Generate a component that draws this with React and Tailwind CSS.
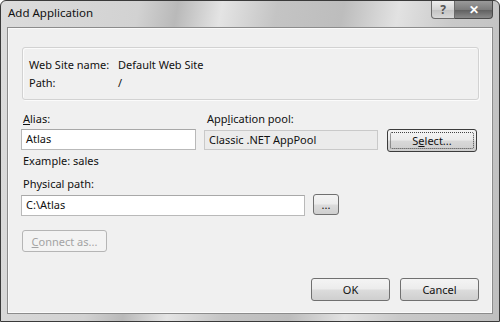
import React from "react";

const font = { fontFamily: '"Noto Sans", "Open Sans", sans-serif' };

function Btn({ children, className = "", focused = false, disabled = false }) {
  return (
    <div
      className={`relative flex items-center justify-center rounded-[3px] border text-[11px] ${
        disabled
          ? "border-[#b5b5b5] bg-[#f3f3f3] text-[#a3a3a3]"
          : focused
          ? "border-[#3c3c3c] bg-[linear-gradient(#f4f4f4_0%,#ececec_48%,#d8d8d8_52%,#cdcdcd_100%)] text-[#111]"
          : "border-[#707070] bg-[linear-gradient(#f4f4f4_0%,#ececec_48%,#dcdcdc_52%,#cfcfcf_100%)] text-[#111]"
      } ${className}`}
    >
      {focused && (
        <div className="absolute inset-[2px] rounded-[2px] border border-dotted border-[#444]" />
      )}
      <span className="relative leading-none">{children}</span>
    </div>
  );
}

function Field({ children, className = "", readOnly = false }) {
  return (
    <div
      className={`flex items-center border px-[4px] text-[11px] text-[#111] ${
        readOnly
          ? "border-[#c9c9c9] bg-[#ebebeb]"
          : "border-[#b9b9b9] border-t-[#a8a8a8] bg-white"
      } ${className}`}
    >
      {children}
    </div>
  );
}

export default function App() {
  return (
    <div
      className="flex h-[322px] w-[500px] flex-col rounded-t-[6px] border border-[#3a3a3a] bg-[linear-gradient(100deg,#dcdcdc_0%,#d2d2d2_25%,#b9b9b9_32%,#e4e4e4_40%,#c4c4c4_50%,#bdbdbd_62%,#e2e2e2_72%,#c9c9c9_82%,#bfbfbf_100%)] text-[#111]"
      style={font}
    >
      {/* title bar */}
      <div className="flex h-[25px] items-start justify-between">
        <div className="pl-[7px] pt-[3px] text-[11.5px] text-[#111]">Add Application</div>
        <div className="mr-[6px] flex">
          <div className="flex h-[18px] w-[24px] items-center justify-center rounded-bl-[4px] border border-t-0 border-[#6a6a6a] bg-[linear-gradient(#eeeeee,#d4d4d4_50%,#c2c2c2_51%,#d8d8d8)] text-[12px] font-bold text-[#555]">
            ?
          </div>
          <div className="flex h-[18px] w-[38px] items-center justify-center rounded-br-[4px] border border-l-0 border-t-0 border-[#4a4a4a] bg-[linear-gradient(#9a9a9a,#7c7c7c_50%,#5e5e5e_51%,#8a8a8a)] text-[12px] font-bold text-white">
            ✕
          </div>
        </div>
      </div>

      {/* client area */}
      <div className="mx-[6px] mt-[1px] flex h-[287px] flex-col border border-[#8c8c8c] bg-[#f0f0f0] px-[13px] shadow-[inset_0_0_0_1px_#fafafa] text-[11px]">
        {/* site info group */}
        <div className="ml-[1px] mt-[19px] flex h-[53px] flex-col gap-[1px] rounded-[3px] border border-[#d2d2d2] pl-[6px] pt-[9px] shadow-[1px_1px_0_#fbfbfb,inset_1px_1px_0_#fbfbfb]">
          <div className="flex h-[17px] items-center">
            <span className="w-[89px]">Web Site name:</span>
            <span>Default Web Site</span>
          </div>
          <div className="flex h-[17px] items-center">
            <span className="w-[89px]">Path:</span>
            <span>/</span>
          </div>
        </div>

        {/* alias / app pool */}
        <div className="mt-[11px] flex">
          <div className="flex w-[175px] flex-col">
            <div className="flex h-[17px] items-center pl-[2px]">
              <span>
                <span className="underline">A</span>lias:
              </span>
            </div>
            <Field className="mt-[1px] h-[21px] w-[175px]">Atlas</Field>
            <div className="mt-[3px] flex h-[17px] items-center pl-[2px]">Example: sales</div>
          </div>
          <div className="ml-[8px] flex flex-col">
            <div className="flex h-[17px] items-center pl-[3px]">
              <span>
                App<span className="underline">l</span>ication pool:
              </span>
            </div>
            <div className="mt-[1px] flex items-start">
              <Field readOnly className="mt-[1px] h-[20px] w-[174px]">
                Classic .NET AppPool
              </Field>
              <Btn focused className="ml-[9px] h-[23px] w-[90px]">
                S<span className="underline">e</span>lect...
              </Btn>
            </div>
          </div>
        </div>

        {/* physical path */}
        <div className="mt-[6px] flex h-[17px] items-center pl-[2px]">Physical path:</div>
        <div className="mt-[1px] flex items-start">
          <Field className="mt-[1px] h-[21px] w-[284px]">C:\Atlas</Field>
          <Btn className="ml-[8px] h-[21px] w-[26px] text-[10px]">...</Btn>
        </div>

        <Btn disabled className="ml-[1px] mt-[14px] h-[22px] w-[85px]">
          <span className="underline">C</span>onnect as...
        </Btn>

        {/* footer buttons */}
        <div className="mt-auto mb-[12px] flex justify-end gap-[10px]">
          <Btn className="h-[23px] w-[79px]">OK</Btn>
          <Btn className="h-[23px] w-[79px]">Cancel</Btn>
        </div>
      </div>
    </div>
  );
}
